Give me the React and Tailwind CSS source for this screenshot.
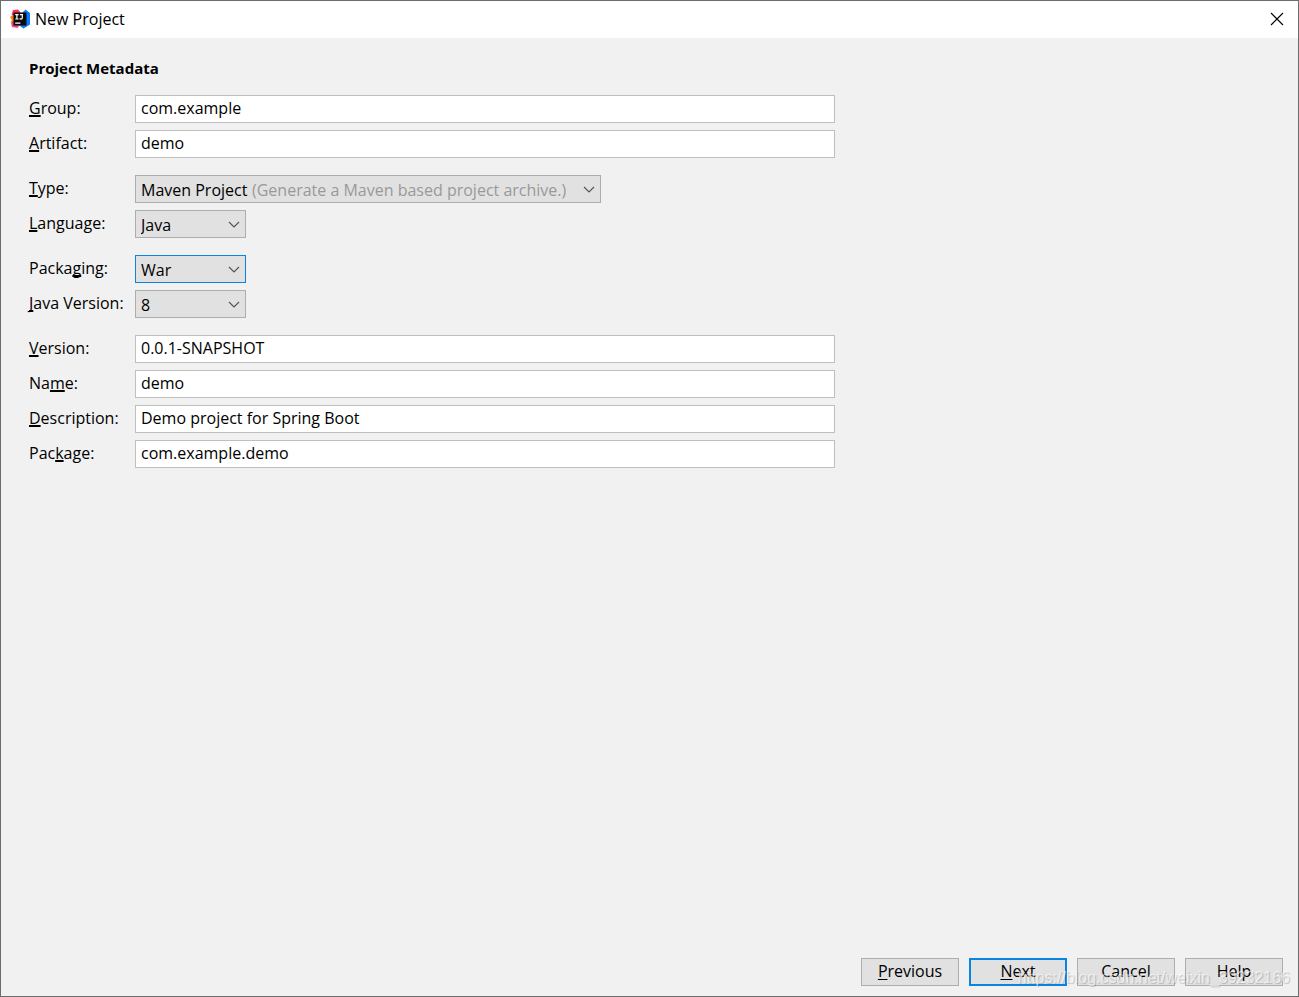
import React from 'react';

const Mnemonic = ({ text, at, className }) => (
    <>
        {text.slice(0, at)}
        <span className={className}>{text[at]}</span>
        {text.slice(at + 1)}
    </>
);

const Row = ({ id, label, at = 0, children }) => (
    <div className="flex h-7 items-center">
        <label htmlFor={id} className="w-[106px] shrink-0 whitespace-nowrap pb-0.5">
            <Mnemonic
                text={label}
                at={at}
                className="underline decoration-2 underline-offset-1 [text-decoration-skip-ink:none]"
            />
        </label>
        {children}
    </div>
);

const TextRow = ({ id, label, at, value }) => (
    <Row id={id} label={label} at={at}>
        <input
            id={id}
            type="text"
            defaultValue={value}
            className="h-7 min-w-0 flex-1 border border-[#bfbfbf] bg-white px-[5px] pb-0.5 outline-none focus:border-[#0a84e0]"
        />
    </Row>
);

const SelectRow = ({ id, label, at, options, hint, active }) => (
    <Row id={id} label={label} at={at}>
        <div className={hint ? 'relative w-[466px]' : 'relative w-[111px]'}>
            <select
                id={id}
                className={`block h-7 w-full appearance-none border bg-[#e1e1e1] px-[5px] pt-0.5 outline-none ${
                    active ? 'border-[#0a84e0]' : 'border-[#adadad]'
                }`}
            >
                {options.map((option) => (
                    <option key={option}>{option}</option>
                ))}
            </select>
            {hint && (
                <span className="pointer-events-none absolute inset-y-0 left-[117px] flex items-center whitespace-nowrap pt-0.5 text-[#999999]">
                    {hint}
                </span>
            )}
            <svg
                viewBox="0 0 12 8"
                className="pointer-events-none absolute top-[11px] right-1.5 h-2 w-3"
                fill="none"
                stroke="#555555"
                strokeWidth="1.2"
            >
                <path d="M1 1 L6 6 L11 1" />
            </svg>
        </div>
    </Row>
);

const Logo = () => (
    <svg viewBox="0 0 20 20" className="h-5 w-5">
        <path d="M3 1 L8 0.5 L11 4 L5 8 L1.5 6 Z" fill="#fe315d" />
        <path d="M0 8 L4 5.5 L5 13 L0.5 13.5 L2 11 Z" fill="#f97a12" />
        <path d="M1 13.5 L4.5 12 L9 16 L8 19 L2 18 Z" fill="#f0408a" />
        <path d="M12 4 L15.5 0.5 L20 4 L20 15.5 L13.5 19.5 L8.5 16 L15 15 Z" fill="#087cfa" />
        <rect x="3.5" y="3.5" width="13" height="13" fill="#0b0b0b" />
        <path
            d="M5.2 5.6 H8.6 M6.9 5.6 V10 M5.2 10 H8.6 M9.9 5.6 H13 M12.3 5.6 V8.8 Q12.3 10.1 11 10.1 Q10.2 10.1 9.7 9.5 M5.2 14.1 H10.4"
            fill="none"
            stroke="#ffffff"
            strokeWidth="1.2"
        />
    </svg>
);

const buttons = [
    { text: 'Previous', at: 0 },
    { text: 'Next', at: 0, primary: true },
    { text: 'Cancel' },
    { text: 'Help' },
];

const App = () => {
    return (
        <div className="relative flex min-h-screen flex-col border border-[#6d6d6d] bg-[#f1f1f1] font-['Open_Sans',sans-serif] text-base text-black">
            <header className="flex h-[37px] items-center bg-white pl-[9px] pr-[14px] pb-0.5">
                <Logo />
                <h1 className="ml-[5px] flex-1">New Project</h1>
                <button type="button" aria-label="Close">
                    <svg viewBox="0 0 14 14" className="h-3.5 w-3.5" stroke="#000000" strokeWidth="1.1">
                        <path d="M1 1 L13 13 M13 1 L1 13" />
                    </svg>
                </button>
            </header>

            <main className="flex-1 px-7 pt-[18px]">
                <h2 className="text-[15px] font-bold leading-6">Project Metadata</h2>
                <form className="mt-[15px] flex w-full max-w-[806px] flex-col gap-[17px]">
                    <div className="flex flex-col gap-[7px]">
                        <TextRow id="group" label="Group:" value="com.example" />
                        <TextRow id="artifact" label="Artifact:" value="demo" />
                    </div>
                    <div className="flex flex-col gap-[7px]">
                        <SelectRow
                            id="type"
                            label="Type:"
                            options={['Maven Project', 'Gradle Project']}
                            hint="(Generate a Maven based project archive.)"
                        />
                        <SelectRow id="language" label="Language:" options={['Java', 'Kotlin', 'Groovy']} />
                    </div>
                    <div className="flex flex-col gap-[7px]">
                        <SelectRow id="packaging" label="Packaging:" at={5} options={['War', 'Jar']} active />
                        <SelectRow id="java-version" label="Java Version:" options={['8', '11', '14']} />
                    </div>
                    <div className="flex flex-col gap-[7px]">
                        <TextRow id="version" label="Version:" value="0.0.1-SNAPSHOT" />
                        <TextRow id="name" label="Name:" at={2} value="demo" />
                        <TextRow id="description" label="Description:" value="Demo project for Spring Boot" />
                        <TextRow id="package" label="Package:" at={3} value="com.example.demo" />
                    </div>
                </form>
            </main>

            <footer className="flex justify-end gap-2.5 pb-2.5 pr-[15px]">
                {buttons.map(({ text, at, primary }) => (
                    <button
                        key={text}
                        type="button"
                        className={`flex h-7 w-[98px] items-center justify-center bg-[#e1e1e1] pb-0.5 ${
                            primary ? 'border-2 border-[#0a84e0]' : 'border border-[#adadad]'
                        }`}
                    >
                        <span>
                            {at === undefined ? (
                                text
                            ) : (
                                <Mnemonic text={text} at={at} className="underline underline-offset-2" />
                            )}
                        </span>
                    </button>
                ))}
            </footer>

            <span className="pointer-events-none absolute right-2 bottom-1.5 font-['Liberation_Sans',sans-serif] text-base text-white/60 [text-shadow:1px_1px_1px_rgba(0,0,0,0.2)]">
                https://blog.csdn.net/weixin_39232166
            </span>
        </div>
    );
};

export default App;
